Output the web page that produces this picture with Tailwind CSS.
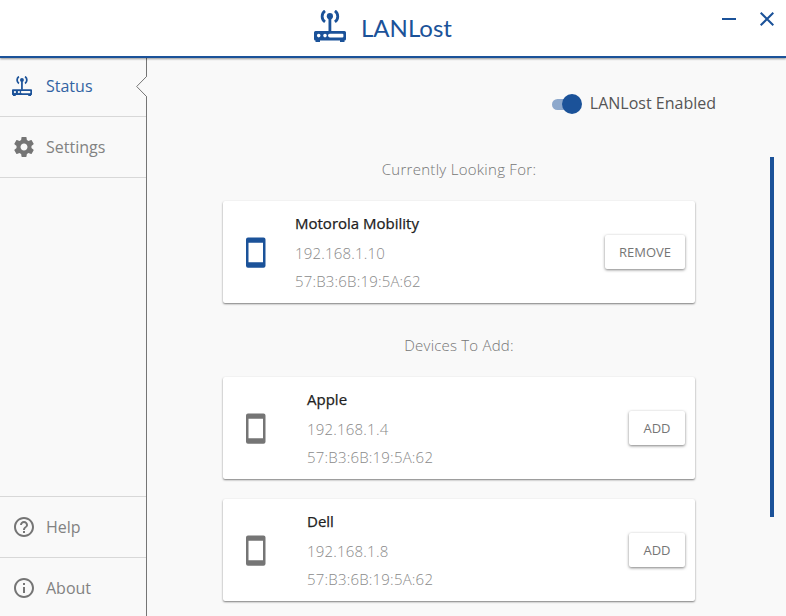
<!DOCTYPE html>
<html lang="en">
<head>
<meta charset="utf-8">
<title>LANLost</title>
<script src="https://cdn.jsdelivr.net/npm/@tailwindcss/browser@4"></script>
</head>
<body class="w-[786px] h-[616px] overflow-hidden flex flex-col bg-[#f9f9f9] font-['Open_Sans',sans-serif] font-normal text-[#757575]">
<svg class="hidden">
  <symbol id="lan" viewBox="0 0 32 32">
    <path fill="none" stroke="currentColor" stroke-width="2.800" d="M11 .900C7.200 3.600 7.200 9.200 11 11.900M20.900 .900c3.800 2.700 3.800 8.300 0 11"/>
    <circle cx="15.900" cy="6.200" r="3.100" fill="currentColor"/>
    <path fill="currentColor" d="M14.500 7h2.800v15h-2.800z"/>
    <path fill="currentColor" fill-rule="evenodd" d="M1.500 21h29a1.500 1.500 0 0 1 1.500 1.500v6.500a1.500 1.500 0 0 1-1.500 1.500V32h-4.500v-1.500h-20V32H1.500v-1.500A1.500 1.500 0 0 1 0 29V22.500a1.500 1.500 0 0 1 1.500-1.500zM4.700 23.800a1.800 1.800 0 1 0 0 3.600 1.800 1.800 0 0 0 0-3.600zM11 23.800a1.800 1.800 0 1 0 0 3.600 1.800 1.800 0 0 0 0-3.600zM15.800 23.800a1.800 1.800 0 0 0 0 3.600h12.600a1 1 0 0 0 1-1v-1.600a1 1 0 0 0-1-1z"/>
  </symbol>
  <symbol id="phone" viewBox="0 0 20 31">
    <path fill="currentColor" fill-rule="evenodd" d="M2 .400h15.500a2 2 0 0 1 2 2v26.300a2 2 0 0 1-2 2H2a2 2 0 0 1-2-2V2.400a2 2 0 0 1 2-2zM2.500 5.800v19.500h14.500V5.800z"/>
  </symbol>
</svg>

<header class="relative z-10 h-[58px] shrink-0 bg-white border-b-2 border-[#1b5299] shadow-[0_1px_2px_rgba(0,0,0,0.4)] text-[#1b5299]">
  <div class="flex h-full items-start pl-[314px] pt-[10px]">
    <svg class="size-8"><use href="#lan"/></svg>
    <h1 class="ml-[15px] mt-[2px] text-[24px] leading-8 font-normal font-['Lato',sans-serif]">LANLost</h1>
    <div class="ml-auto flex pr-3 pt-[2px] gap-6">
      <svg class="w-[14px] h-[14px]" viewBox="0 0 14 14"><path d="M0 6h14v2H0z" fill="currentColor"/></svg>
      <svg class="w-[14px] h-[14px]" viewBox="0 0 14 14"><path d="M.700.700l12.600 12.600M13.300.700L.700 13.300" stroke="currentColor" stroke-width="2"/></svg>
    </div>
  </div>
</header>

<div class="flex flex-1 min-h-0">
  <nav class="relative w-[147px] shrink-0 border-r border-[#757575] flex flex-col text-[16px]">
    <a class="h-[59px] flex items-center border-b border-[#d8d8d8] pl-3 pb-[2px] text-[#1b5299]"><svg class="size-5 mr-[14px]"><use href="#lan"/></svg><span class="text-[#3263a3]">Status</span></a>
    <a class="h-[61px] flex items-center border-b border-[#d8d8d8] pl-3"><svg class="size-6 mr-[10px]" viewBox="0 0 24 24" fill="currentColor"><path d="M19.430 12.980c.040-.320.070-.640.070-.980s-.030-.660-.070-.980l2.110-1.650c.190-.150.240-.420.120-.640l-2-3.460c-.120-.220-.390-.300-.610-.220l-2.490 1c-.520-.400-1.080-.730-1.690-.980l-.380-2.650C14.460 2.180 14.250 2 14 2h-4c-.250 0-.460.180-.490.420l-.380 2.650c-.610.250-1.170.590-1.690.980l-2.490-1c-.230-.090-.490 0-.610.220l-2 3.460c-.130.220-.070.490.120.640l2.110 1.650c-.040.320-.070.650-.070.980s.030.660.070.980l-2.110 1.650c-.190.150-.240.420-.120.640l2 3.460c.120.220.390.300.610.220l2.490-1c.520.400 1.080.730 1.690.980l.380 2.650c.030.240.240.420.490.420h4c.250 0 .460-.180.490-.420l.380-2.650c.610-.250 1.170-.590 1.690-.980l2.490 1c.230.090.490 0 .610-.220l2-3.460c.120-.220.070-.490-.120-.640l-2.110-1.650zM12 15.500c-1.930 0-3.500-1.570-3.500-3.500s1.570-3.500 3.500-3.500 3.500 1.570 3.500 3.500-1.570 3.500-3.500 3.500z"/></svg><span class="text-[#828282]">Settings</span></a>
    <a class="mt-auto h-[61px] flex items-center border-t border-[#d8d8d8] pl-3"><svg class="size-6 mr-[10px]" viewBox="0 0 24 24" fill="currentColor"><path d="M11 18h2v-2h-2v2zm1-16C6.480 2 2 6.480 2 12s4.480 10 10 10 10-4.480 10-10S17.520 2 12 2zm0 18c-4.410 0-8-3.590-8-8s3.590-8 8-8 8 3.590 8 8-3.590 8-8 8zm0-14c-2.210 0-4 1.790-4 4h2c0-1.100.900-2 2-2s2 .900 2 2c0 2-3 1.750-3 5h2c0-2.250 3-2.500 3-5 0-2.210-1.790-4-4-4z"/></svg><span class="text-[#828282]">Help</span></a>
    <a class="h-[59px] flex items-center border-t border-[#d8d8d8] pl-3 pt-[2px]"><svg class="size-6 mr-[10px]" viewBox="0 0 24 24" fill="currentColor"><path d="M11 17h2v-6h-2v6zm1-15C6.480 2 2 6.480 2 12s4.480 10 10 10 10-4.480 10-10S17.520 2 12 2zm0 18c-4.410 0-8-3.590-8-8s3.590-8 8-8 8 3.590 8 8-3.590 8-8 8zM11 9h2V7h-2v2z"/></svg><span class="text-[#828282]">About</span></a>
    <svg class="absolute left-[136px] top-[18px] w-[12px] h-[22px]" viewBox="0 0 12 22"><path d="M12 .5h-1.500L.700 10.500l9.800 10H12z" fill="#f9f9f9"/><path d="M10.500 0v.5L.700 10.500l9.800 10v1" fill="none" stroke="#757575"/></svg>
  </nav>

  <main class="flex flex-1 min-w-0 flex-col">
    <div class="h-[99px] shrink-0 pt-[33px] pr-[70px] flex justify-end">
      <label class="flex h-6 items-center text-[16px] text-[#555]">
        <span class="flex w-[30px] h-5 items-center justify-end mr-2 mt-[2px]"><span class="w-[20px] h-[11px] rounded-l-full bg-[#8da8cc] -mr-[10px]"></span><span class="size-5 rounded-full bg-[#1b5299]"></span></span>LANLost Enabled</label>
    </div>
    <div class="flex flex-1 min-h-0">
      <section class="ml-[76px] w-[472px] flex flex-col">
        <h2 class="h-[44px] text-center text-[15px] leading-6 font-light tracking-[0.280px] text-[#757575]">Currently Looking For:</h2>
        <article class="h-[102px] shrink-0 flex items-center bg-white rounded-[2px] shadow-[0_1px_2px_rgba(0,0,0,0.5)] pl-[23px] pr-[10px]">
          <svg class="w-5 h-[31px] text-[#1b5299] mr-[29px] mt-px"><use href="#phone"/></svg>
          <div class="text-[15px] leading-7 font-light tracking-[0.180px] text-[#8a8a8a]"><h3 class="h-[30px] -mt-px font-normal tracking-normal text-[#212121] [-webkit-text-stroke:0.250px_#212121]">Motorola Mobility</h3><p>192.168.1.10</p><p>57:B3:6B:19:5A:62</p></div>
          <button class="ml-auto w-[80px] h-[34px] pt-[2px] rounded-[2px] bg-white shadow-[0_1px_3px_rgba(0,0,0,0.5)] text-[13px]">REMOVE</button>
        </article>
        <h2 class="h-[74px] shrink-0 pt-[30px] text-center text-[15px] leading-6 font-light tracking-[0.200px] text-[#757575]">Devices To Add:</h2>
        <div class="flex flex-col gap-5">
        <article class="h-[102px] shrink-0 flex items-center bg-white rounded-[2px] shadow-[0_1px_2px_rgba(0,0,0,0.5)] pl-[23px] pr-[10px]">
          <svg class="w-5 h-[31px] mr-[41px] mt-px"><use href="#phone"/></svg>
          <div class="text-[15px] leading-7 font-light tracking-[0.200px] text-[#8a8a8a]"><h3 class="h-[30px] -mt-px font-normal tracking-normal text-[#212121] [-webkit-text-stroke:0.250px_#212121]">Apple</h3><p>192.168.1.4</p><p>57:B3:6B:19:5A:62</p></div>
          <button class="ml-auto w-[56px] h-[34px] pt-[2px] rounded-[2px] bg-white shadow-[0_1px_3px_rgba(0,0,0,0.5)] text-[13px]">ADD</button>
        </article>
        <article class="h-[102px] shrink-0 flex items-center bg-white rounded-[2px] shadow-[0_1px_2px_rgba(0,0,0,0.5)] pl-[23px] pr-[10px]">
          <svg class="w-5 h-[31px] mr-[41px] mt-px"><use href="#phone"/></svg>
          <div class="text-[15px] leading-7 font-light tracking-[0.200px] text-[#8a8a8a]"><h3 class="h-[30px] -mt-px font-normal tracking-normal text-[#212121] [-webkit-text-stroke:0.250px_#212121]">Dell</h3><p>192.168.1.8</p><p>57:B3:6B:19:5A:62</p></div>
          <button class="ml-auto w-[56px] h-[34px] pt-[2px] rounded-[2px] bg-white shadow-[0_1px_3px_rgba(0,0,0,0.5)] text-[13px]">ADD</button>
        </article>
        </div>
      </section>
      <div class="ml-auto mr-3 w-1 h-[360px] bg-[#1b5299]"></div>
    </div>
  </main>
</div>
</body>
</html>
